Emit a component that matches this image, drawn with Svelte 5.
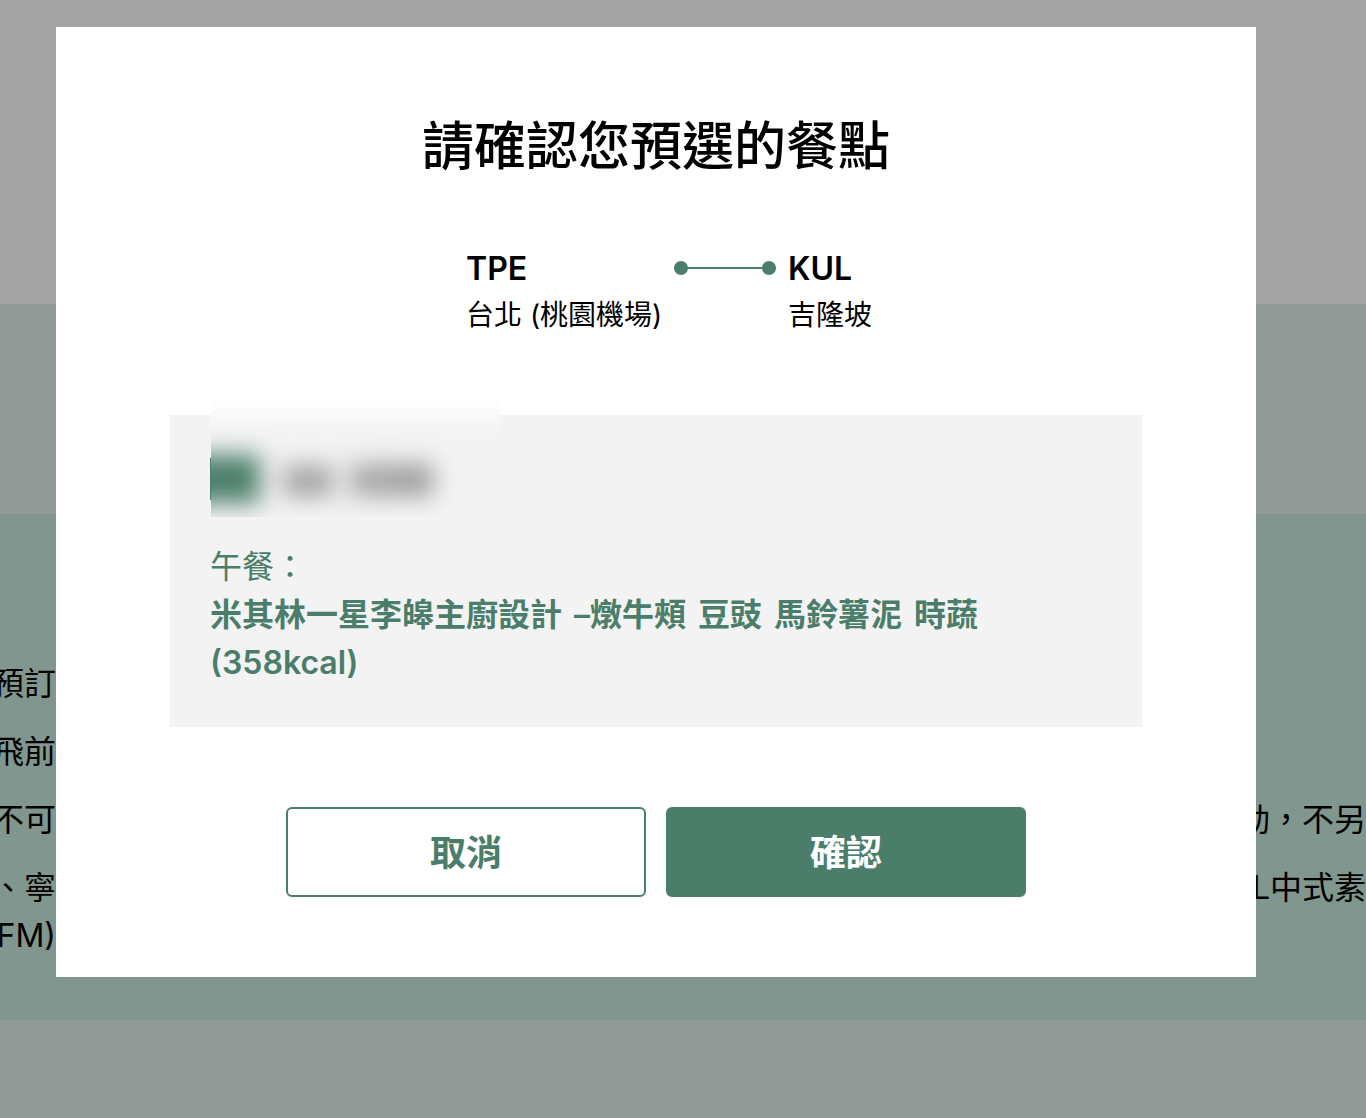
<script lang="ts">
	let open = true;

	const from = { code: 'TPE', city: '台北 (桃園機場)' };
	const to = { code: 'KUL', city: '吉隆坡' };
	const dish = ['米其林一星李皞主廚設計', '–燉牛頰', '豆豉', '馬鈴薯泥', '時蔬', '(358kcal)'];

	const notes = [
		[{ left: '預訂', right: '' }],
		[{ left: '飛前', right: '' }],
		[{ left: '不可', right: '動，不另' }],
		[
			{ left: '、寧', right: 'L中式素' },
			{ left: 'FM)', right: '' }
		]
	];

	function close() {
		open = false;
	}
</script>

<div class="page">
	<div class="hero"></div>
	<div class="band"></div>
	<section class="notes">
		<ul>
			{#each notes as note}
				<li>
					{#each note as line}
						<div class="line">
							<span class="start">{line.left}</span>
							<span>{line.right}</span>
						</div>
					{/each}
				</li>
			{/each}
		</ul>
	</section>
	<div class="band rest"></div>
</div>

{#if open}
	<div class="overlay">
		<div class="modal" role="dialog" aria-modal="true" aria-labelledby="title">
			<h1 id="title">請確認您預選的餐點</h1>

			<div class="route">
				<div>
					<strong>{from.code}</strong>
					<span>{from.city}</span>
				</div>
				<div class="track"><i></i><i></i></div>
				<div>
					<strong>{to.code}</strong>
					<span>{to.city}</span>
				</div>
			</div>

			<div class="meal">
				<div class="passenger">
					<div class="badge"></div>
				</div>
				<!-- passenger name is masked -->
				<div class="mask">
					<div class="blob seat"></div>
					<div class="blob first"></div>
					<div class="blob last"></div>
				</div>
				<p class="kind">午餐：</p>
				<p class="dish">
					{#each dish as part}
						<span>{part}</span>
					{/each}
				</p>
			</div>

			<div class="actions">
				<button class="cancel" on:click={close}>取消</button>
				<button class="confirm" on:click={close}>確認</button>
			</div>
		</div>
	</div>
{/if}

<style>
	:global(body) {
		margin: 0;
		overflow: hidden;
		font-family: Inter, 'Noto Sans CJK TC', sans-serif;
		color: #000;
	}

	.page {
		display: flex;
		flex-direction: column;
		min-height: 100vh;
		background: #a3a3a3;
	}

	.hero {
		height: 304px;
	}

	.band {
		height: 210px;
		background: #919a96;
	}

	.rest {
		flex: 1;
		height: auto;
	}

	.notes {
		padding: 146px 0 60px;
		background: #81968e;
		font-size: 32px;
		line-height: 48px;
	}

	ul {
		display: flex;
		flex-direction: column;
		gap: 20px;
		margin: 0;
		padding: 0;
		list-style: none;
	}

	.line {
		display: flex;
		justify-content: space-between;
		height: 48px;
		white-space: nowrap;
	}

	.start {
		display: flex;
		justify-content: flex-end;
		width: 56px;
	}

	.overlay {
		position: fixed;
		inset: 0;
		padding: 27px 110px 27px 56px;
		overflow: auto;
	}

	.modal {
		box-sizing: border-box;
		max-width: 1200px;
		margin: 0 auto;
		padding: 81px 114px 80px;
		background: #fff;
	}

	h1 {
		margin: 0 0 59px;
		font-size: 52px;
		line-height: 78px;
		font-weight: 500;
		text-align: center;
	}

	.route {
		display: grid;
		grid-template-columns: 208px 102px 84px;
		justify-content: center;
		padding-left: 14px;
		margin-bottom: 78px;
		white-space: nowrap;
	}

	.route > div:last-child {
		padding-left: 12px;
	}

	.route strong {
		display: block;
		font-size: 32px;
		line-height: 48px;
		font-weight: 600;
	}

	.route span {
		display: block;
		font-size: 28px;
		line-height: 44px;
	}

	.track {
		display: flex;
		align-items: center;
		justify-content: space-between;
		height: 46px;
		background: linear-gradient(#4b7e6a, #4b7e6a) center / 100% 2px no-repeat;
	}

	.track i {
		width: 14px;
		height: 14px;
		border-radius: 50%;
		background: #4b7e6a;
	}

	.meal {
		position: relative;
		padding: 40px;
		background: #f3f3f3;
		color: #4b7e6a;
		font-size: 32px;
		line-height: 48px;
	}

	.passenger {
		display: flex;
		align-items: center;
		height: 48px;
		margin-bottom: 40px;
	}

	.badge {
		width: 48px;
		height: 42px;
		background: #4b7e6a;
	}

	.mask {
		position: absolute;
		left: 41px;
		top: -20px;
		width: 289px;
		height: 122px;
		overflow: hidden;
		background: linear-gradient(#fff, #fcfcfc 12px, #f5f5f5 32px, #f3f3f3 44px);
	}

	.blob {
		position: absolute;
		filter: blur(12px);
	}

	.seat {
		left: -48px;
		top: 60px;
		width: 97px;
		height: 48px;
		background: #4b7e6a;
	}

	.first {
		left: 72px;
		top: 71px;
		width: 50px;
		height: 30px;
		background: #a0a0a0;
	}

	.last {
		left: 138px;
		top: 69px;
		width: 84px;
		height: 32px;
		background: linear-gradient(90deg, #aaa, #989898);
	}

	p {
		margin: 0;
	}

	.dish {
		display: flex;
		flex-wrap: wrap;
		column-gap: 12px;
		font-weight: 600;
	}

	.actions {
		display: flex;
		justify-content: center;
		gap: 20px;
		margin-top: 80px;
	}

	button {
		box-sizing: border-box;
		width: 360px;
		height: 90px;
		padding: 0 0 4px;
		border: 2px solid #4b7e6a;
		border-radius: 6px;
		font: inherit;
		font-size: 36px;
		font-weight: 700;
		cursor: pointer;
	}

	.cancel {
		background: #fff;
		color: #4b7e6a;
	}

	.confirm {
		background: #4b7e6a;
		color: #fff;
	}
</style>
